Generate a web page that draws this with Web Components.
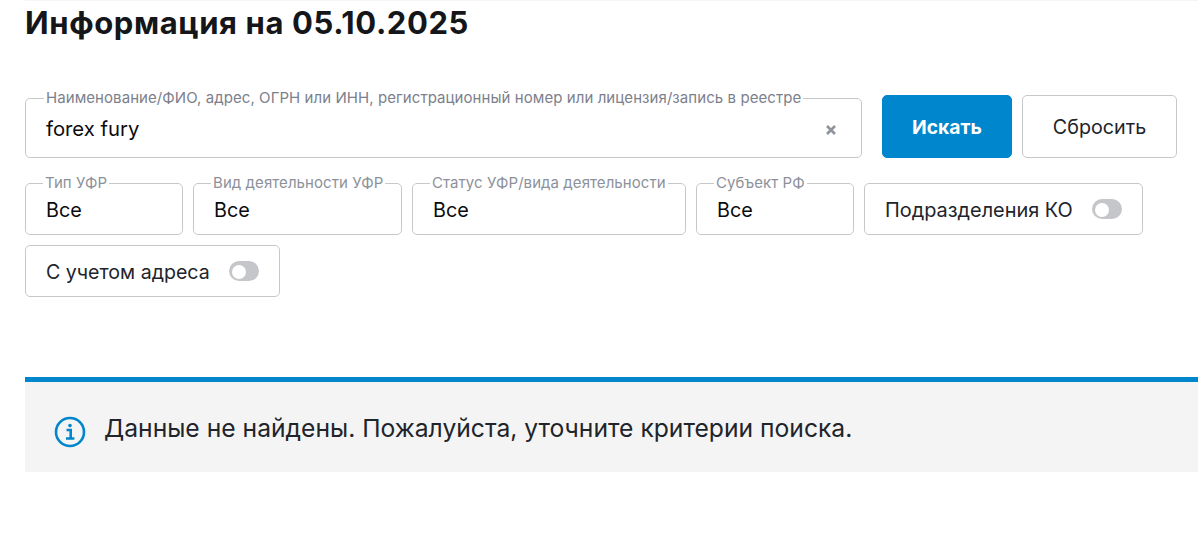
<!DOCTYPE html>
<html lang="ru">
<head>
<meta charset="utf-8">
<title>Информация</title>
<style>
  html, body { margin: 0; background: #fff; }
  body { font-family: Inter, "Noto Sans", sans-serif; color: #21242b; }
</style>
</head>
<body>
<search-page>
  <span slot="title">Информация на 05.10.2025</span>
  <outline-field slot="search" class="grow" label="Наименование/ФИО, адрес, ОГРН или ИНН, регистрационный номер или лицензия/запись в реестре" value="forex fury" clearable></outline-field>
  <action-button slot="search" style="width:130px" primary>Искать</action-button>
  <action-button slot="search" style="width:155px">Сбросить</action-button>
  <outline-field slot="filters" style="width:158px" label="Тип УФР" value="Все"></outline-field>
  <outline-field slot="filters" style="width:209px" label="Вид деятельности УФР" value="Все"></outline-field>
  <outline-field slot="filters" style="width:274px" label="Статус УФР/вида деятельности" value="Все"></outline-field>
  <outline-field slot="filters" style="width:158px" label="Субъект РФ" value="Все"></outline-field>
  <toggle-box slot="filters" style="width:279px">Подразделения КО</toggle-box>
  <toggle-box slot="filters" style="width:255px;--label-size:19.6px">С учетом адреса</toggle-box>
  <info-alert slot="result">Данные не найдены. Пожалуйста, уточните критерии поиска.</info-alert>
</search-page>

<template id="page-tpl">
  <style>
    :host { display: block; padding-left: 25px; }
    h1 { margin: 0; height: 91px; box-sizing: border-box; border-top: 1px solid #f5f5f5;
         font-size: 31px; line-height: 44px; font-weight: 700; letter-spacing: 0.6px; color: #14161a; }
    .search { display: flex; align-items: flex-end; gap: 10px; padding-right: 21px; }
    .search ::slotted(.grow) { flex: 1; margin-right: 10px; }
    .filters { display: flex; flex-wrap: wrap; align-items: flex-end; gap: 10px; margin-top: 18px; padding-right: 21px; }
    .result { margin-top: 80px; }
  </style>
  <h1><slot name="title"></slot></h1>
  <div class="search"><slot name="search"></slot></div>
  <div class="filters"><slot name="filters"></slot></div>
  <div class="result"><slot name="result"></slot></div>
</template>

<template id="field-tpl">
  <style>
    :host { display: block; }
    fieldset { box-sizing: border-box; height: 59px; margin: 0; padding: 0 20px; border: 1px solid #c6c8cc; border-radius: 5px;
               display: flex; align-items: center; min-width: 0; }
    :host([clearable]) fieldset { height: 67px; }
    legend { margin-left: -3px; padding: 0 2px; font-size: 15px; line-height: 14px; letter-spacing: 0.07px; color: #8d919b; white-space: nowrap; }
    :host([clearable]) legend { margin-left: -2px; color: #7c808c; }
    .value { flex: 1; font-size: 19.8px; line-height: 24px; color: #0b0b0d; position: relative; top: -2px; }
    :host([clearable]) .value { font-size: 20.3px; }
    svg { display: none; width: 10px; height: 10px; margin-right: 5px; position: relative; top: -1px; }
    :host([clearable]) svg { display: block; }
  </style>
  <fieldset>
    <legend></legend>
    <span class="value"></span>
    <svg viewBox="0 0 10 10"><path d="M1 1l8 8M9 1l-8 8" stroke="#8f939b" stroke-width="2.6" fill="none"/></svg>
  </fieldset>
</template>

<template id="button-tpl">
  <style>
    :host { display: block; }
    button { box-sizing: border-box; width: 100%; height: 63px; padding: 0; border: 1px solid #c6c8cc; border-radius: 5px;
             background: #fff; font: 400 19.7px Inter, "Noto Sans", sans-serif; color: #21242b; }
    :host([primary]) button { background: #0086cc; border-color: #0086cc; color: #fff; font-weight: 700; font-size: 19.3px; }
  </style>
  <button type="button"><slot></slot></button>
</template>

<template id="toggle-tpl">
  <style>
    :host { display: block; }
    .box { box-sizing: border-box; height: 52px; display: flex; align-items: center; gap: 19px; padding: 0 20px;
           border: 1px solid #c6c8cc; border-radius: 5px; font-size: var(--label-size, 19.9px); color: #21242b; white-space: nowrap; }
    .box span:first-child { position: relative; top: 1px; }
    .track { width: 30px; height: 20px; border-radius: 10px; background: #c4c6ca; display: flex; align-items: center; padding-left: 3px; box-sizing: border-box; }
    .knob { width: 14px; height: 14px; border-radius: 50%; background: #fff; }
  </style>
  <div class="box"><span><slot></slot></span><span class="track"><span class="knob"></span></span></div>
</template>

<template id="alert-tpl">
  <style>
    :host { display: flex; align-items: center; gap: 18px; box-sizing: border-box; height: 95px; padding: 0 0 0 29px;
            background: #f4f4f4; border-top: 5px solid #0086cc; font-size: 24.66px; color: #21242b; }
    svg { width: 32px; height: 32px; flex: none; margin-top: 10px; }
    span { margin-top: 2px; }
  </style>
  <svg viewBox="0 0 32 32" fill="none">
    <circle cx="16" cy="16" r="14" stroke="#0086cc" stroke-width="2.6"/>
    <circle cx="16" cy="9.6" r="1.8" fill="#0086cc"/>
    <path d="M12.5 14h4.2v8M12 22.5h8.4" stroke="#0086cc" stroke-width="2.6"/>
  </svg>
  <span><slot></slot></span>
</template>

<script>
function shadowFrom(el, id) {
  const root = el.attachShadow({ mode: 'open' });
  root.appendChild(document.getElementById(id).content.cloneNode(true));
  return root;
}

class SearchPage extends HTMLElement {
  constructor() {
    super();
    shadowFrom(this, 'page-tpl');
  }
}

class OutlineField extends HTMLElement {
  constructor() {
    super();
    this.$root = shadowFrom(this, 'field-tpl');
  }

  connectedCallback() {
    this.$root.querySelector('legend').textContent = this.getAttribute('label');
    this.$root.querySelector('.value').textContent = this.getAttribute('value');
  }
}

class ActionButton extends HTMLElement {
  constructor() {
    super();
    shadowFrom(this, 'button-tpl');
  }
}

class ToggleBox extends HTMLElement {
  constructor() {
    super();
    shadowFrom(this, 'toggle-tpl');
  }
}

class InfoAlert extends HTMLElement {
  constructor() {
    super();
    shadowFrom(this, 'alert-tpl');
  }
}

customElements.define('search-page', SearchPage);
customElements.define('outline-field', OutlineField);
customElements.define('action-button', ActionButton);
customElements.define('toggle-box', ToggleBox);
customElements.define('info-alert', InfoAlert);
</script>
</body>
</html>
